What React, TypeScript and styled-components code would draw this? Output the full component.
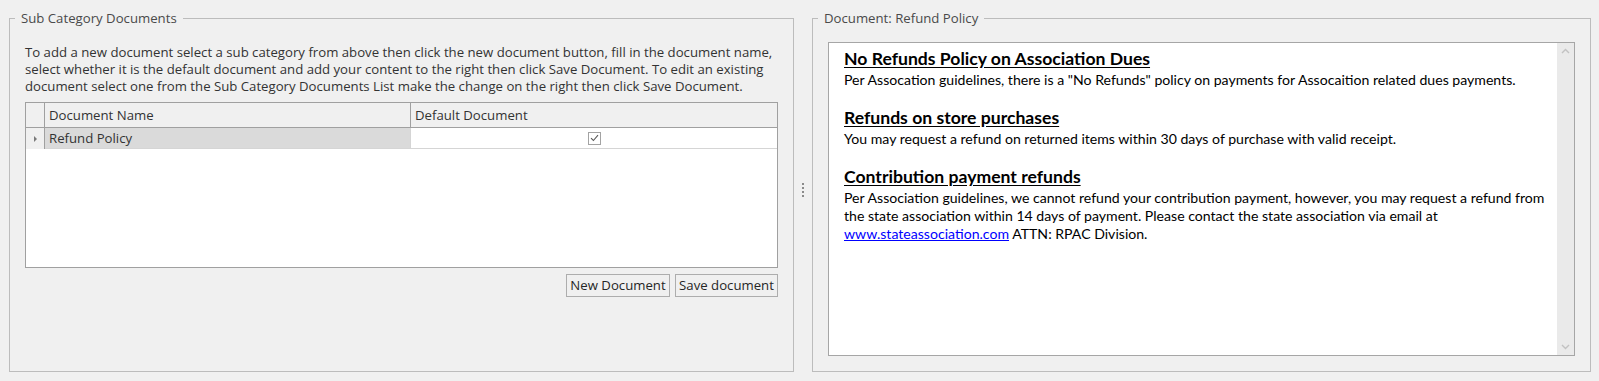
import React from "react";
import styled, { createGlobalStyle } from "styled-components";

const UI_FONT = `"Open Sans", "Noto Sans", sans-serif`;
const UI_SIZE = "13.2px";

const GlobalStyle = createGlobalStyle`
  html, body {
    margin: 0;
    padding: 0;
    background: #f0f0f0;
  }
  body {
    font-family: ${UI_FONT};
    color: #333;
  }
  * { box-sizing: border-box; }
`;

const Page = styled.div`
  display: flex;
  height: 381px;
  padding: 10px 8px 9px 9px;
  background: #f0f0f0;
`;

const Group = styled.fieldset<{ $width?: number }>`
  margin: 0;
  padding: 0 15px 15px 15px;
  border: 1px solid #bcbcbc;
  min-width: 0;
  display: flex;
  flex-direction: column;
  ${(p) => (p.$width ? `width: ${p.$width}px; flex: none;` : `flex: 1;`)}
`;

const Legend = styled.legend`
  margin-left: -10px;
  padding: 0 6px;
  font-size: ${UI_SIZE};
  line-height: 16px;
  color: #4a4a4a;
`;

const Instructions = styled.p`
  margin: 18px 0 7px 0;
  font-size: ${UI_SIZE};
  line-height: 17px;
  color: #333;
  white-space: nowrap;
`;

const Grid = styled.div`
  height: 166px;
  border: 1px solid #a0a0a0;
  background: #fff;
  display: flex;
  flex-direction: column;
`;

const GridRow = styled.div<{ $header?: boolean }>`
  display: grid;
  grid-template-columns: 19px 366px 1fr;
  height: ${(p) => (p.$header ? 25 : 21)}px;
`;

const HeaderCell = styled.div<{ $last?: boolean }>`
  background: #f0f0f0;
  border-bottom: 1px solid #a0a0a0;
  border-right: ${(p) => (p.$last ? "none" : "1px solid #a0a0a0")};
  font-size: ${UI_SIZE};
  line-height: 24px;
  padding-left: 4px;
  color: #333;
  white-space: nowrap;
`;

const RowHeaderCell = styled.div`
  background: #f0f0f0;
  border-right: 1px solid #a0a0a0;
  display: flex;
  align-items: center;
  padding-left: 8px;
`;

const RowArrow = styled.span`
  width: 0;
  height: 0;
  border-top: 3px solid transparent;
  border-bottom: 3px solid transparent;
  border-left: 3px solid #7a7a7a;
`;

const DataCell = styled.div<{ $selected?: boolean; $center?: boolean }>`
  background: ${(p) => (p.$selected ? "#dadada" : "#fff")};
  border-bottom: 1px solid #d5d5d5;
  border-right: ${(p) => (p.$selected ? "1px solid #d5d5d5" : "none")};
  font-size: ${UI_SIZE};
  line-height: 20px;
  padding-left: ${(p) => (p.$center ? 0 : 4)}px;
  color: #333;
  display: flex;
  align-items: center;
  justify-content: ${(p) => (p.$center ? "center" : "flex-start")};
  white-space: nowrap;
`;

const CheckBox = styled.span`
  width: 13px;
  height: 13px;
  border: 1px solid #a3a3a3;
  background: #fff;
  display: flex;
  align-items: center;
  justify-content: center;
`;

const ButtonRow = styled.div`
  display: flex;
  justify-content: flex-end;
  gap: 5px;
  margin-top: 6px;
`;

const Button = styled.button<{ $width: number }>`
  width: ${(p) => p.$width}px;
  height: 23px;
  padding: 0;
  margin: 0;
  border: 1px solid #adadad;
  background: #f0f0f0;
  font-family: ${UI_FONT};
  font-size: ${UI_SIZE};
  color: #262626;
  line-height: 21px;
  white-space: nowrap;
`;

const Splitter = styled.div`
  width: 18px;
  flex: none;
  display: flex;
  flex-direction: column;
  align-items: center;
  justify-content: center;
  gap: 2px;
  padding-bottom: 2px;
`;

const Dot = styled.span`
  width: 2px;
  height: 2px;
  background: #8a8a8a;
`;

const DocBox = styled.div`
  margin-top: 16px;
  flex: 1;
  border: 1px solid #a6a6a6;
  background: #fff;
  display: flex;
`;

const DocContent = styled.div`
  flex: 1;
  padding: 4px 8px 0 15px;
  font-family: "Lato", "Liberation Sans", sans-serif;
  color: #000;
`;

const Section = styled.div`
  margin-bottom: 17px;
`;

const Heading = styled.div`
  font-size: 17.6px;
  font-weight: 700;
  line-height: 24px;
  text-decoration: underline;
  text-underline-offset: 2px;
  white-space: nowrap;
`;

const Body = styled.div`
  font-size: 14.1px;
  line-height: 18px;
  white-space: nowrap;
`;

const Link = styled.a`
  color: #0000ff;
  text-decoration: underline;
`;

const ScrollBar = styled.div`
  width: 17px;
  flex: none;
  background: #eaeaea;
  display: flex;
  flex-direction: column;
  justify-content: space-between;
  align-items: center;
  padding: 5px 0 5px 0;
`;

const Chevron = ({ down }: { down?: boolean }) => (
  <svg width="9" height="6" viewBox="0 0 9 6">
    <path
      d={down ? "M1 1 L4.5 4.5 L8 1" : "M1 5 L4.5 1.5 L8 5"}
      fill="none"
      stroke="#c2c2c2"
      strokeWidth="1.4"
    />
  </svg>
);

export default function App() {
  return (
    <>
      <GlobalStyle />
      <Page>
        <Group $width={785}>
          <Legend>Sub Category Documents</Legend>
          <Instructions>
            To add a new document select a sub category from above then click the new document button, fill in the document name,
            <br />
            select whether it is the default document and add your content to the right then click Save Document. To edit an existing
            <br />
            document select one from the Sub Category Documents List make the change on the right then click Save Document.
          </Instructions>
          <Grid>
            <GridRow $header>
              <HeaderCell />
              <HeaderCell>Document Name</HeaderCell>
              <HeaderCell $last>Default Document</HeaderCell>
            </GridRow>
            <GridRow>
              <RowHeaderCell>
                <RowArrow />
              </RowHeaderCell>
              <DataCell $selected>Refund Policy</DataCell>
              <DataCell $center>
                <CheckBox>
                  <svg width="9" height="8" viewBox="0 0 9 8">
                    <path d="M1 4.2 L3.4 6.5 L8 1.2" fill="none" stroke="#5a5a5a" strokeWidth="1.1" />
                  </svg>
                </CheckBox>
              </DataCell>
            </GridRow>
          </Grid>
          <ButtonRow>
            <Button $width={104}>New Document</Button>
            <Button $width={103}>Save document</Button>
          </ButtonRow>
        </Group>
        <Splitter>
          <Dot />
          <Dot />
          <Dot />
          <Dot />
        </Splitter>
        <Group>
          <Legend>Document: Refund Policy</Legend>
          <DocBox>
            <DocContent>
              <Section>
                <Heading>No Refunds Policy on Association Dues</Heading>
                <Body>
                  Per Assocation guidelines, there is a "No Refunds" policy on payments for Assocaition related dues payments.
                </Body>
              </Section>
              <Section>
                <Heading>Refunds on store purchases</Heading>
                <Body>You may request a refund on returned items within 30 days of purchase with valid receipt.</Body>
              </Section>
              <Section>
                <Heading>Contribution payment refunds</Heading>
                <Body>
                  Per Association guidelines, we cannot refund your contribution payment, however, you may request a refund from
                  <br />
                  the state association within 14 days of payment. Please contact the state association via email at
                  <br />
                  <Link href="#">www.stateassociation.com</Link> ATTN: RPAC Division.
                </Body>
              </Section>
            </DocContent>
            <ScrollBar>
              <Chevron />
              <Chevron down />
            </ScrollBar>
          </DocBox>
        </Group>
      </Page>
    </>
  );
}
